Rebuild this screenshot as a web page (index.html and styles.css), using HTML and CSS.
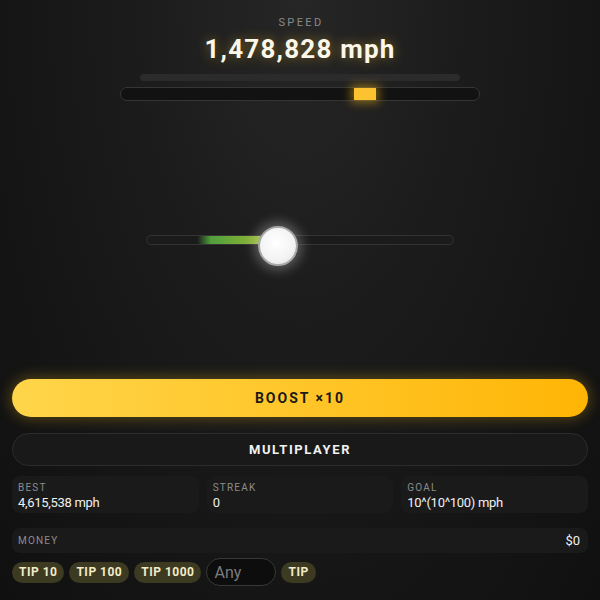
FILE: index.html
```html
<!DOCTYPE html>
<html>
    <head>
        <meta content="text/html;charset=utf-8" http-equiv="Content-Type" />
        <title>Speed</title>
        <link rel="stylesheet" href="styles.css">
    </head>
    <body>
        <div class="app">
            <div class="speed-box">
                <div class="speed-label">SPEED</div>
                <div class="speed-value">1,478,828 mph</div>
                <div class="speed-bar"></div>
                <div class="meter">
                    <span class="meter-mark"></span>
                </div>
            </div>

            <div class="slider">
                <span class="slider-fill"></span>
                <span class="slider-thumb"></span>
            </div>

            <button class="boost">BOOST ×10</button>
            <button class="multi">MULTIPLAYER</button>

            <div class="stats">
                <div class="stat">
                    <span class="stat-label">BEST</span>
                    <span class="stat-value">4,615,538 mph</span>
                </div>
                <div class="stat">
                    <span class="stat-label">STREAK</span>
                    <span class="stat-value">0</span>
                </div>
                <div class="stat">
                    <span class="stat-label">GOAL</span>
                    <span class="stat-value">10^(10^100) mph</span>
                </div>
            </div>

            <div class="money">
                <span class="stat-label">MONEY</span>
                <span class="money-value">$0</span>
            </div>

            <div class="tips">
                <button class="tip">TIP 10</button>
                <button class="tip">TIP 100</button>
                <button class="tip">TIP 1000</button>
                <input type="text" class="tip-input" placeholder="Any">
                <button class="tip">TIP</button>
            </div>
        </div>
    </body>
</html>
```

FILE: styles.css
```css
* {
    box-sizing: border-box;
}

html, body {
    margin: 0;
    height: 100%;
}

body {
    font-family: Roboto, "Liberation Sans", Arial, sans-serif;
    color: #eee;
    background: radial-gradient(ellipse at 50% 0%, #262626 0%, #1a1a1a 45%, #101010 100%);
    background-color: #111;
    overflow: hidden;
}

.app {
    display: flex;
    flex-direction: column;
    padding: 0 12px;
}

.speed-box {
    display: flex;
    flex-direction: column;
    align-items: center;
    padding-top: 16px;
}

.speed-label {
    font-size: 11px;
    line-height: 14px;
    letter-spacing: 2.4px;
    color: #8a8a8a;
    padding-left: 2px;
}

.speed-value {
    margin-top: 4px;
    font-size: 26px;
    line-height: 30px;
    font-weight: 700;
    letter-spacing: 1.2px;
    color: #fbf7ea;
    text-shadow: 0 0 12px rgba(255, 200, 40, 0.45);
}

.speed-bar {
    margin-top: 10px;
    width: 320px;
    height: 7px;
    border-radius: 4px;
    background-color: #2b2b2b;
}

.meter {
    position: relative;
    margin-top: 6px;
    width: 360px;
    height: 14px;
    border: 1px solid #353535;
    border-radius: 7px;
    background-color: #121212;
}

.meter-mark {
    position: absolute;
    left: 233px;
    top: 0;
    width: 22px;
    height: 12px;
    background-color: #fdc230;
    box-shadow: 0 0 10px 3px rgba(255, 190, 20, 0.45);
}

.slider {
    position: relative;
    align-self: center;
    margin-top: 134px;
    width: 308px;
    height: 10px;
    border: 1px solid #333;
    border-radius: 5px;
    background-color: #1b1b1b;
}

.slider-fill {
    position: absolute;
    left: 50px;
    top: 0;
    width: 76px;
    height: 8px;
    border-radius: 4px;
    background: linear-gradient(90deg, rgba(60, 150, 60, 0) 0%, #4f9e3c 18%, #7aae38 60%, #a7b434 100%);
}

.slider-thumb {
    position: absolute;
    left: 111px;
    top: -10px;
    width: 40px;
    height: 40px;
    border-radius: 50%;
    background: radial-gradient(circle at 45% 40%, #ffffff 0%, #f3f3f3 60%, #d8d8d8 100%);
    border: 2px solid #a8a8a8;
    box-shadow: 0 0 12px 4px rgba(255, 255, 255, 0.28);
}

button {
    font-family: Roboto, "Liberation Sans", Arial, sans-serif;
    cursor: pointer;
}

.boost {
    margin-top: 134px;
    height: 38px;
    border: none;
    border-radius: 19px;
    background: linear-gradient(90deg, #ffd54a 0%, #ffc629 50%, #ffb505 100%);
    box-shadow: 0 0 14px 2px rgba(255, 190, 20, 0.28);
    color: #1c1a14;
    font-size: 14px;
    font-weight: 700;
    letter-spacing: 2px;
}

.multi {
    margin-top: 16px;
    height: 33px;
    border: 1px solid #2c2c2c;
    border-radius: 17px;
    background-color: #191919;
    color: #f2f2f2;
    font-size: 13px;
    font-weight: 700;
    letter-spacing: 1.6px;
}

.stats {
    display: grid;
    grid-template-columns: 1fr 1fr 1fr;
    gap: 8px;
    margin-top: 10px;
}

.stat {
    display: flex;
    flex-direction: column;
    height: 37px;
    padding: 6px 6px 0 6px;
    border-radius: 8px;
    background-color: #1a1a1a;
}

.stat-label {
    font-size: 10px;
    line-height: 12px;
    letter-spacing: 1.2px;
    color: #8c8c8c;
}

.stat-value {
    margin-top: 1px;
    font-size: 13px;
    line-height: 15px;
    letter-spacing: -0.3px;
    color: #f0f0f0;
}

.money {
    display: flex;
    justify-content: space-between;
    align-items: center;
    margin-top: 15px;
    height: 25px;
    padding: 0 8px 0 6px;
    border-radius: 8px;
    background-color: #1a1a1a;
}

.money-value {
    font-size: 13px;
    color: #f0f0f0;
}

.tips {
    display: flex;
    align-items: center;
    gap: 5px;
    margin-top: 5px;
    height: 28px;
}

.tip {
    height: 21px;
    padding: 0 7px;
    border: none;
    border-radius: 11px;
    background-color: #3c3a21;
    color: #f4ecc8;
    font-size: 12px;
    font-weight: 700;
    letter-spacing: 0.5px;
}

.tip-input {
    width: 70px;
    height: 28px;
    padding: 0 7px;
    border: 1px solid #383838;
    border-radius: 14px;
    background-color: #0d0d0d;
    color: #ddd;
    font-family: Roboto, "Liberation Sans", Arial, sans-serif;
    font-size: 16px;
    outline: none;
}

.tip-input::placeholder {
    color: #7c7c7c;
}
```
